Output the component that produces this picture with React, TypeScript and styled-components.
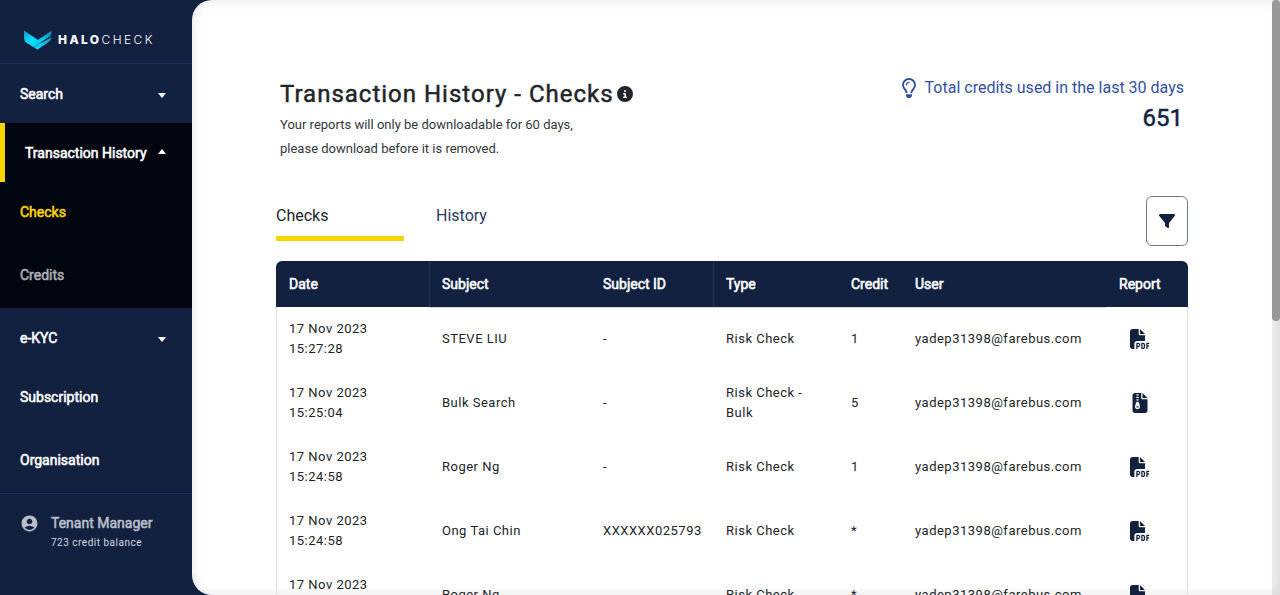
import React from "react";
import styled, { createGlobalStyle, css } from "styled-components";
import { FaCircleInfo, FaFilePdf, FaFileZipper, FaFilter, FaRegLightbulb } from "react-icons/fa6";
import { MdAccountCircle } from "react-icons/md";

const navy = "#12213f";
const yellow = "#fcd500";

const GlobalStyle = createGlobalStyle`
  * { box-sizing: border-box; }
  body {
    margin: 0;
    background: ${navy};
    color: #212529;
    font-family: Roboto, "Liberation Sans", sans-serif;
    font-size: 16px;
    line-height: 24px;
  }
  button, a { font: inherit; color: inherit; text-decoration: none; }
`;

const emboldened = css`
  font-weight: 400;
  -webkit-text-stroke: 0.04em currentColor;
`;

const emboldenedLarge = css`
  font-weight: 400;
  -webkit-text-stroke: 0.02em currentColor;
`;

const Shell = styled.div`
  display: flex;
  height: 100vh;
  overflow: hidden;
`;

const Sidebar = styled.aside`
  display: flex;
  flex-direction: column;
  flex: 0 0 192px;
  color: #fff;
`;

const Brand = styled.a`
  display: flex;
  align-items: center;
  gap: 6px;
  height: 64px;
  padding: 16px 0 0 23px;
  border-bottom: 1px solid #1b2f5a;
`;

const BrandName = styled.span`
  font-family: Inter, sans-serif;
  font-size: 12px;
  line-height: 16px;
  font-weight: 300;
  letter-spacing: 0.2em;
  b { font-weight: 800; }
`;

const Nav = styled.nav`
  display: flex;
  flex-direction: column;
  border-bottom: 1px solid #1b2f5a;
  font-size: 14px;
  ${emboldened}
`;

const NavGroup = styled.button<{ $open?: boolean }>`
  display: flex;
  align-items: center;
  justify-content: space-between;
  height: 59px;
  padding: 0 26px 0 20px;
  border: 0;
  border-left: ${(p) => (p.$open ? `5px solid ${yellow}` : "0")};
  background: ${(p) => (p.$open ? "#00050f" : "transparent")};
  text-align: left;
`;

const SubMenu = styled.div`
  display: flex;
  flex-direction: column;
  background: #00050f;
`;

const NavLink = styled.a<{ $tone?: string }>`
  display: flex;
  align-items: center;
  height: 63px;
  padding: 0 20px 4px;
  color: ${(p) => p.$tone ?? "#fff"};
`;

const Caret = styled.span<{ $up?: boolean }>`
  width: 8px;
  margin-top: ${(p) => (p.$up ? "-2px" : "3px")};
  border: 4px solid transparent;
  border-top: ${(p) => (p.$up ? "0" : "5px solid #fff")};
  border-bottom: ${(p) => (p.$up ? "5px solid #fff" : "0")};
`;

const Account = styled.div`
  display: flex;
  gap: 12px;
  padding: 19px 20px;
  color: #b9bec8;
  svg { margin-top: 1px; }
`;

const AccountName = styled.div`
  font-size: 14px;
  line-height: 20px;
  ${emboldened}
`;

const Balance = styled.div`
  font-size: 10px;
  line-height: 20px;
  letter-spacing: 0.5px;
  color: #d5d9e0;
`;

const Page = styled.div`
  display: flex;
  flex: 1;
  min-width: 0;
  background: #fff;
  border-radius: 20px 0 0 20px;
  box-shadow: inset 0 0 12px rgba(0, 0, 0, 0.11);
  overflow: hidden;
`;

const Main = styled.main`
  flex: 1;
  min-width: 0;
  padding: 72px 84px 0;
  overflow: hidden;
`;

const ScrollTrack = styled.div`
  flex: 0 0 8px;
  background: rgba(0, 0, 0, 0.07);
`;

const ScrollThumb = styled.div`
  height: 54%;
  border-radius: 4px;
  background: #999;
`;

const Header = styled.header`
  display: flex;
  justify-content: space-between;
  align-items: flex-start;
  padding: 0 4px;
`;

const Title = styled.h1`
  display: flex;
  align-items: center;
  gap: 3px;
  margin: 8px 0 5px;
  font-size: 24px;
  line-height: 28px;
  letter-spacing: 1px;
  ${emboldenedLarge}
  svg { width: 16px; height: 16px; }
`;

const Note = styled.p`
  margin: 0;
  font-size: 13px;
  line-height: 24px;
  color: #33373b;
`;

const Credits = styled.div`
  display: flex;
  flex-direction: column;
  align-items: flex-end;
  padding-top: 4px;
`;

const CreditsLabel = styled.div`
  display: flex;
  align-items: center;
  gap: 8px;
  color: #344f9f;
  svg { width: 16px; height: 20px; }
`;

const CreditsTotal = styled.div`
  padding: 2px 1px 0;
  font-size: 24px;
  line-height: 32px;
  color: ${navy};
  ${emboldenedLarge}
`;

const Toolbar = styled.div`
  display: flex;
  justify-content: space-between;
  align-items: flex-start;
  margin: 35px 0 15px;
`;

const Tabs = styled.div`
  display: flex;
  gap: 32px;
`;

const Tab = styled.button<{ $active?: boolean }>`
  width: 128px;
  height: 45px;
  padding: 0;
  border: 0;
  border-bottom: 5px solid ${(p) => (p.$active ? yellow : "transparent")};
  background: none;
  text-align: left;
  && { color: ${(p) => (p.$active ? "#212529" : "#2b3b60")}; }
`;

const FilterButton = styled.button`
  display: flex;
  align-items: center;
  justify-content: center;
  width: 42px;
  height: 50px;
  padding: 0;
  border: 1px solid #6f7a93;
  border-radius: 6px;
  background: #fff;
  && { color: ${navy}; }
`;

const Table = styled.table`
  width: 100%;
  border-collapse: separate;
  border-spacing: 0;
  table-layout: fixed;
  font-size: 13px;
  line-height: 20px;
  letter-spacing: 0.5px;
`;

const HeadCell = styled.th<{ $ruled?: boolean; $lined?: boolean }>`
  height: 46px;
  padding: 0 0 0 ${(p) => (p.$ruled ? 12 : 13)}px;
  background: ${navy};
  border-left: ${(p) => (p.$ruled ? "1px solid #263654" : "0")};
  box-shadow: ${(p) => (p.$lined ? "0 1px 0 #d5d8df" : "none")};
  color: #fff;
  font-size: 14px;
  letter-spacing: 0;
  text-align: left;
  ${emboldened}
  &:first-child { border-top-left-radius: 6px; }
  &:last-child { border-top-right-radius: 6px; }
`;

const Cell = styled.td`
  height: 64px;
  padding: 0 12px 0 13px;
  vertical-align: middle;
  &:first-child { padding-left: 12px; border-left: 1px solid #dee2e6; }
  &:last-child { border-right: 1px solid #dee2e6; }
`;

const ReportLink = styled.a`
  display: flex;
  padding-left: 11px;
  color: ${navy};
`;

const columns = [
  { label: "Date", width: 153 },
  { label: "Subject", width: 161, ruled: true, lined: true },
  { label: "Subject ID", width: 123, lined: true },
  { label: "Type", width: 125, ruled: true, lined: true },
  { label: "Credit", width: 64, lined: true },
  { label: "User", width: 204, lined: true },
  { label: "Report", width: 82 },
];

const rows = [
  { time: "15:27:28", subject: "STEVE LIU", id: "-", type: "Risk Check", credit: "1" },
  { time: "15:25:04", subject: "Bulk Search", id: "-", type: "Risk Check - Bulk", credit: "5", zip: true },
  { time: "15:24:58", subject: "Roger Ng", id: "-", type: "Risk Check", credit: "1" },
  { time: "15:24:58", subject: "Ong Tai Chin", id: "XXXXXX025793", type: "Risk Check", credit: "*" },
  { time: "15:24:58", subject: "Roger Ng", id: "-", type: "Risk Check", credit: "*" },
];

const Logo = () => (
  <svg width="29" height="20" viewBox="0 0 29 20" aria-hidden="true">
    <defs>
      <linearGradient id="wing" x1="0" y1="0" x2="1" y2="1">
        <stop offset="0" stopColor="#1193bd" />
        <stop offset="0.4" stopColor="#08dcff" />
        <stop offset="1" stopColor="#06d0f5" />
      </linearGradient>
      <linearGradient id="blade" x1="0" y1="1" x2="1" y2="0">
        <stop offset="0" stopColor="#08dcff" />
        <stop offset="0.5" stopColor="#08c8ec" />
        <stop offset="1" stopColor="#147aa0" />
      </linearGradient>
    </defs>
    <path d="M1 0.500 L15 10 L19 12.500 L14.500 19.500 L3.500 12.800 Q1 11 1 8 Z" fill="url(#wing)" />
    <path d="M28.500 0.800 Q29 5 26.500 6.800 L12 16 L9.500 13.500 Z" fill="url(#blade)" />
    <path d="M28.500 6.700 Q28.500 10 26 11.700 L14.500 19.500 L11.500 17.600 Z" fill="url(#blade)" />
    <path d="M28.500 6 L11 17" stroke={navy} strokeWidth="0.600" opacity="0.7" />
  </svg>
);

export default function App() {
  return (
    <>
      <GlobalStyle />
      <Shell>
        <Sidebar>
          <Brand href="#" aria-label="Halocheck">
            <Logo />
            <BrandName><b>HALO</b>CHECK</BrandName>
          </Brand>
          <Nav>
            <NavGroup>Search<Caret /></NavGroup>
            <NavGroup $open>Transaction History<Caret $up /></NavGroup>
            <SubMenu>
              <NavLink href="#" $tone={yellow}>Checks</NavLink>
              <NavLink href="#" $tone="#adb0b5">Credits</NavLink>
            </SubMenu>
            <NavGroup>e-KYC<Caret /></NavGroup>
            <NavLink href="#">Subscription</NavLink>
            <NavLink href="#">Organisation</NavLink>
          </Nav>
          <Account>
            <MdAccountCircle size={19} />
            <div>
              <AccountName>Tenant Manager</AccountName>
              <Balance>723 credit balance</Balance>
            </div>
          </Account>
        </Sidebar>
        <Page>
          <Main>
            <Header>
              <div>
                <Title>Transaction History - Checks<FaCircleInfo /></Title>
                <Note>Your reports will only be downloadable for 60 days,<br />please download before it is removed.</Note>
              </div>
              <Credits>
                <CreditsLabel><FaRegLightbulb />Total credits used in the last 30 days</CreditsLabel>
                <CreditsTotal>651</CreditsTotal>
              </Credits>
            </Header>
            <Toolbar>
              <Tabs role="tablist">
                <Tab role="tab" aria-selected $active>Checks</Tab>
                <Tab role="tab" aria-selected={false}>History</Tab>
              </Tabs>
              <FilterButton aria-label="Filter"><FaFilter size={16} /></FilterButton>
            </Toolbar>
            <Table>
              <colgroup>
                {columns.map((c) => <col key={c.label} width={c.width} />)}
              </colgroup>
              <thead>
                <tr>
                  {columns.map((c) => (
                    <HeadCell key={c.label} $ruled={c.ruled} $lined={c.lined}>{c.label}</HeadCell>
                  ))}
                </tr>
              </thead>
              <tbody>
                {rows.map((r, i) => (
                  <tr key={i}>
                    <Cell>17 Nov 2023<br />{r.time}</Cell>
                    <Cell>{r.subject}</Cell>
                    <Cell>{r.id}</Cell>
                    <Cell>{r.type}</Cell>
                    <Cell>{r.credit}</Cell>
                    <Cell>yadep31398@farebus.com</Cell>
                    <Cell>
                      <ReportLink href="#" aria-label="Download report">
                        {r.zip ? <FaFileZipper size={20} /> : <FaFilePdf size={20} />}
                      </ReportLink>
                    </Cell>
                  </tr>
                ))}
              </tbody>
            </Table>
          </Main>
          <ScrollTrack aria-hidden="true"><ScrollThumb /></ScrollTrack>
        </Page>
      </Shell>
    </>
  );
}
